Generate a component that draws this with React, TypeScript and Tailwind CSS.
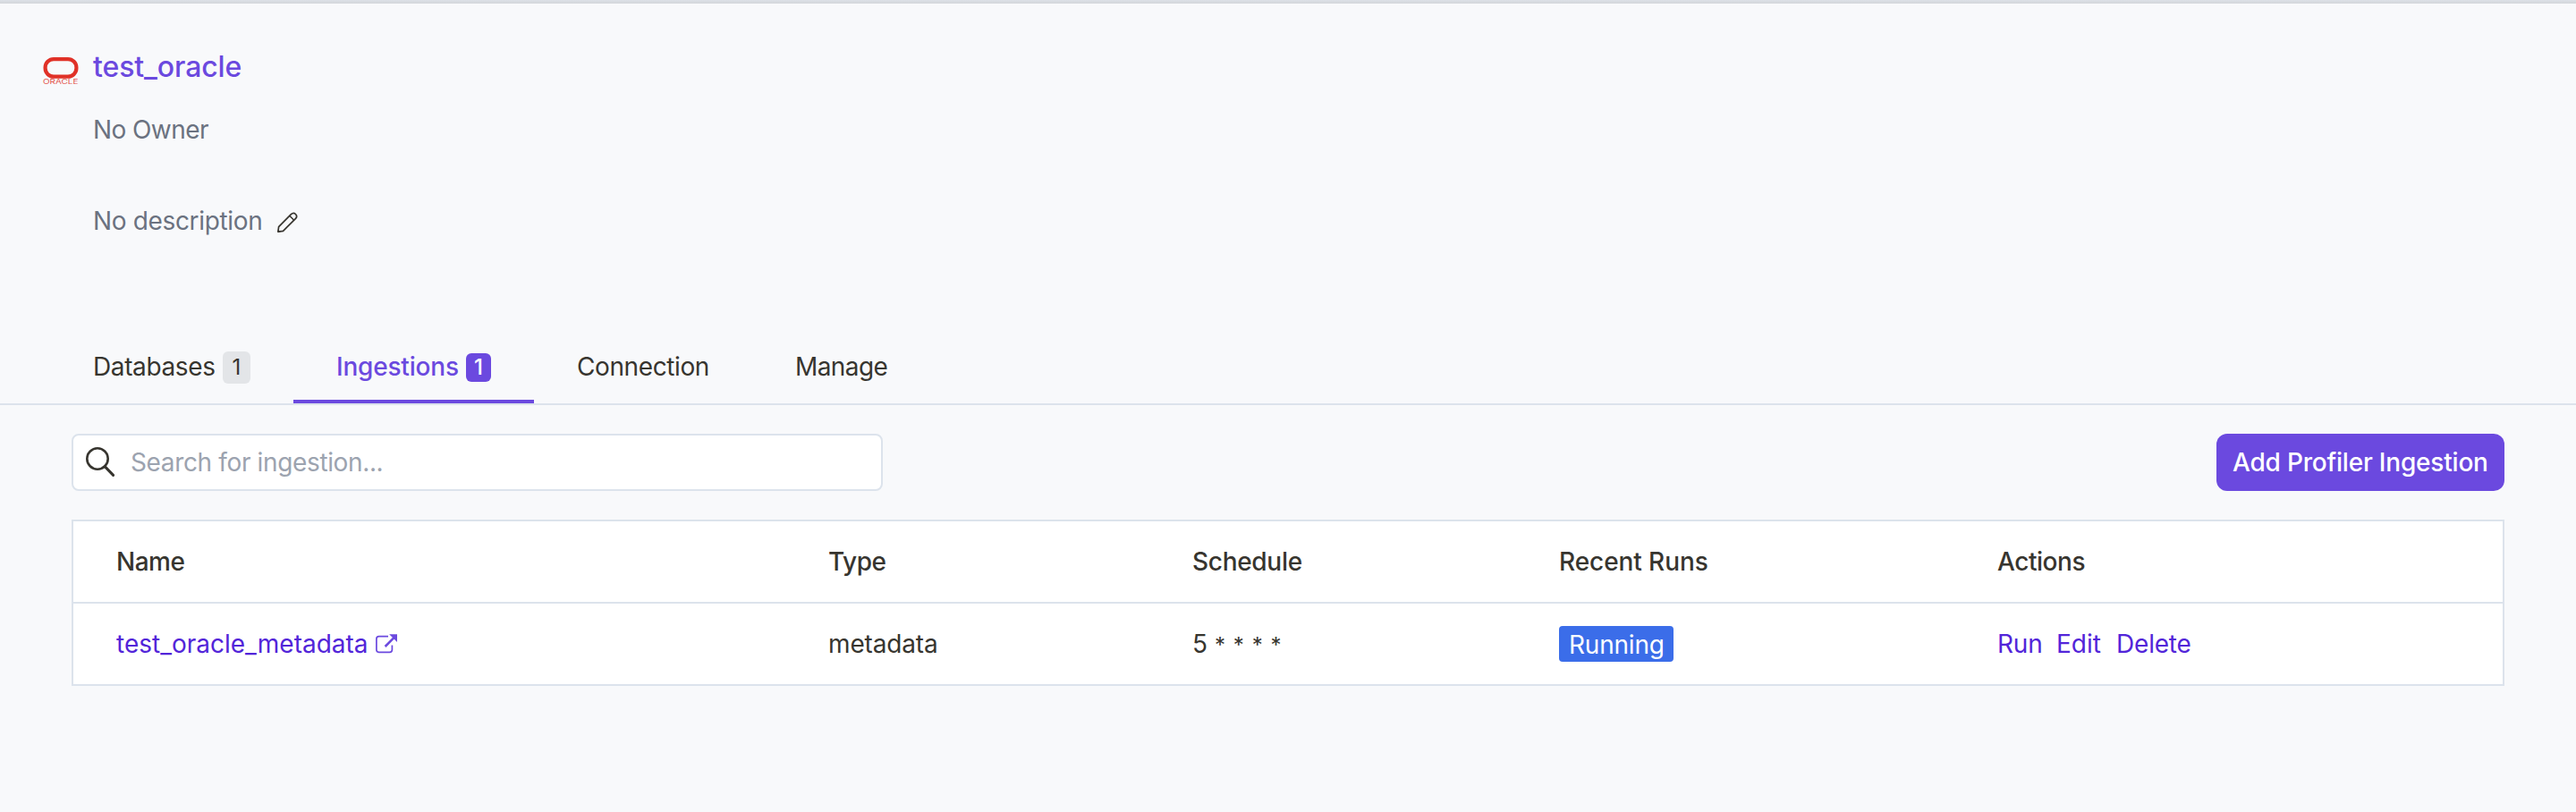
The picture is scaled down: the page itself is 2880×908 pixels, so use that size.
import type { ReactNode } from "react";

function OracleLogo() {
  return (
    <svg width="40" height="32" viewBox="0 0 40 32" className="block">
      <rect x="2.6" y="3.1" width="34.8" height="19.6" rx="9.4" fill="none" stroke="#e03127" strokeWidth="4.2" />
      <text
        x="0"
        y="31.2"
        fill="#e4554c"
        fontFamily="Inter, sans-serif"
        fontSize="7.6"
        textLength="39.4"
        lengthAdjust="spacingAndGlyphs"
      >
        ORACLE
      </text>
    </svg>
  );
}

function PencilIcon() {
  return (
    <svg width="24" height="24" viewBox="0 0 24 24" fill="none" stroke="#37352f" strokeWidth="1.7" strokeLinejoin="round" className="block">
      <path d="M1.9 22.2 L2.6 16.6 L16.4 2.7 C18 1.1 20.2 1.2 21.5 2.5 C22.8 3.8 22.9 6 21.3 7.6 L7.5 21.3 Z" />
      <path d="M14.8 4.3 L19.7 9.2" strokeWidth="1.6" />
      <path d="M1.4 22.6 L1.9 19.4 L4.6 22.2 Z" fill="#37352f" stroke="none" />
    </svg>
  );
}

function SearchIcon() {
  return (
    <svg width="34" height="36" viewBox="0 0 34 36" fill="none" stroke="#37352f" strokeWidth="2.6" className="block">
      <circle cx="14" cy="14" r="11.7" />
      <path d="M22.2 22.6 L31.6 32.4" strokeWidth="3" strokeLinecap="round" />
    </svg>
  );
}

function ExternalIcon() {
  return (
    <svg width="24" height="22" viewBox="0 0 24 22" fill="none" stroke="#6b49df" className="block">
      <path
        d="M14 2.6 H3.6 A2.8 2.8 0 0 0 0.9 5.4 V17.6 A2.8 2.8 0 0 0 3.6 20.4 H15.6 A2.8 2.8 0 0 0 18.4 17.6 V12.4"
        strokeWidth="1.7"
      />
      <path d="M10.6 14 L20.4 4.2" strokeWidth="2.5" />
      <path d="M15.2 0.3 H24 V9 Z" fill="#6b49df" stroke="none" />
    </svg>
  );
}

function Tab({ active, className, children }: { active?: boolean; className: string; children: ReactNode }) {
  return (
    <button
      className={`flex h-[82px] items-center border-b-4 pt-1 text-left ${active ? "border-[#6b49df] font-medium text-[#6b49df]" : "border-transparent text-[#37352f]"} ${className}`}
    >
      {children}
    </button>
  );
}

export default function App() {
  return (
    <div className="flex h-[908px] w-[2880px] flex-col overflow-hidden bg-[#f8f9fb] font-['Inter',sans-serif] text-[28px] leading-10 text-[#37352f]">
      <div className="h-1 shrink-0 bg-linear-to-b from-[#dde1e7] to-[#d3d6da]" />

      <header className="flex h-[365px] shrink-0 flex-col pl-12">
        <div className="mt-[51px] flex h-10 items-center">
          <div className="mt-2 w-14">
            <OracleLogo />
          </div>
          <h1 className="text-[32px] font-medium tracking-[-0.1px] text-[#6b49df]">test_oracle</h1>
        </div>
        <p className="mt-[30px] pl-14 tracking-[-0.58px] text-[#6b7280]">No Owner</p>
        <div className="mt-[62px] flex items-center pl-14 tracking-[-0.34px] text-[#6b7280]">
          <p className="w-[205px]">No description</p>
          <div className="mt-1">
            <PencilIcon />
          </div>
        </div>
      </header>

      <nav className="flex h-[84px] shrink-0 border-b-2 border-[#dce3ec] pl-14">
        <Tab className="w-[272px] pl-12">
          <span className="w-[145px] tracking-[-0.37px]">Databases</span>
          <span className="mt-0.5 flex h-9 w-[31px] items-center justify-center rounded-md bg-[#e3e5e8] text-[24px]">1</span>
        </Tab>
        <Tab active className="w-[269px] pl-12">
          <span className="w-[145px] tracking-[-0.2px]">Ingestions</span>
          <span className="mt-0.5 flex h-8 w-7 items-center justify-center rounded-md bg-[#6b49df] text-[24px] text-white">1</span>
        </Tab>
        <Tab className="w-[244px] pl-12">
          <span className="tracking-[-0.4px]">Connection</span>
        </Tab>
        <Tab className="w-[196px] pl-12">
          <span className="tracking-[-0.6px]">Manage</span>
        </Tab>
      </nav>

      <main className="flex flex-col px-20 pt-8">
        <div className="flex h-16 items-center justify-between">
          <label className="flex h-16 w-[907px] items-center rounded-lg border-2 border-[#dce3ec] bg-white">
            <span className="w-16 pl-[13px]">
              <SearchIcon />
            </span>
            <input
              placeholder="Search for ingestion..."
              className="h-14 grow bg-transparent tracking-[-0.36px] outline-none placeholder:text-[#9ca3af]"
            />
          </label>
          <button className="h-16 w-[322px] rounded-xl bg-[#6b49df] pl-[18px] text-left font-medium tracking-[-0.2px] whitespace-nowrap text-white">
            Add Profiler Ingestion
          </button>
        </div>

        <section className="mt-8 border-2 border-[#dce3ec] bg-white">
          <div className="grid h-[92px] grid-cols-[796px_407px_410px_490px_1fr] items-center border-b-2 border-[#dce3ec] font-medium *:pl-12">
            <span className="tracking-[-0.48px]">Name</span>
            <span className="tracking-[-0.5px]">Type</span>
            <span className="tracking-[-0.3px]">Schedule</span>
            <span className="tracking-[-0.08px]">Recent Runs</span>
            <span className="tracking-[-0.45px]">Actions</span>
          </div>
          <div className="grid h-[90px] grid-cols-[796px_407px_410px_490px_1fr] items-center *:pl-12">
            <a className="flex items-center text-[#5225d9]">
              <span className="w-[290px]">test_oracle_metadata</span>
              <ExternalIcon />
            </a>
            <span className="tracking-[-0.15px]">metadata</span>
            <span>
              5 <span className="text-[24px] leading-none [word-spacing:2.1px]">* * * *</span>
            </span>
            <div>
              <span className="flex h-10 w-32 items-center rounded bg-[#3b6de9] pt-0.5 pl-[11px] tracking-[-0.2px] text-white">
                Running
              </span>
            </div>
            <div className="flex text-[#5225d9]">
              <span className="w-[66px] tracking-[-0.2px]">Run</span>
              <span className="w-[67px]">Edit</span>
              <span className="tracking-[-0.2px]">Delete</span>
            </div>
          </div>
        </section>
      </main>
    </div>
  );
}
